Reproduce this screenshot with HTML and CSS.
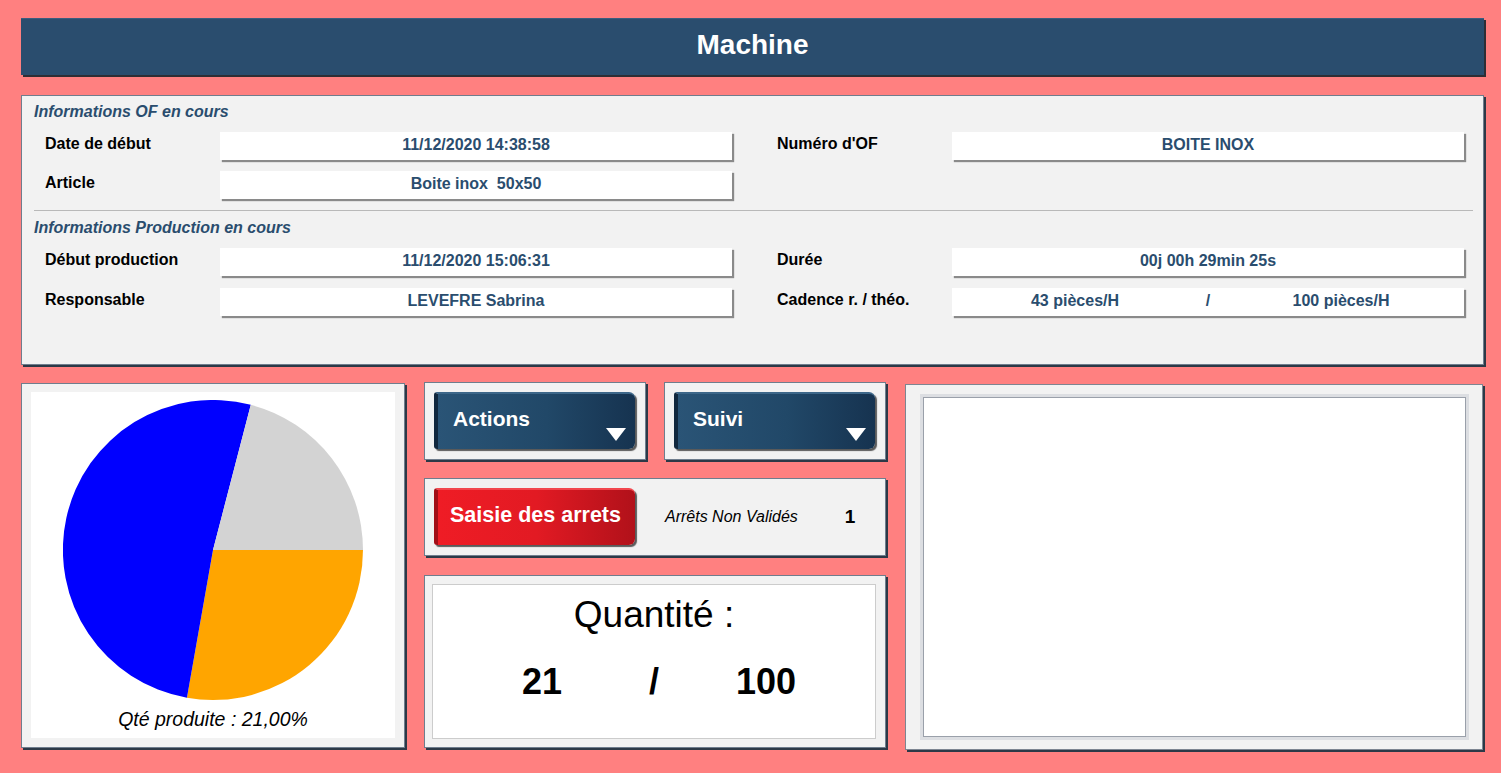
FILE: index.html
```html
<!DOCTYPE html>
<html lang="fr">
<head>
<meta charset="utf-8">
<title>Machine</title>
<link rel="stylesheet" href="styles.css">
</head>
<body>
<div class="page">
  <header class="header">Machine</header>

  <section class="info panel">
    <div class="sec-title">Informations OF en cours</div>
    <div class="row first">
      <div class="pair"><div class="label">Date de début</div><div class="field">11/12/2020 14:38:58</div></div>
      <div class="pair"><div class="label">Numéro d'OF</div><div class="field">BOITE INOX</div></div>
    </div>
    <div class="row">
      <div class="pair"><div class="label">Article</div><div class="field">Boite inox&nbsp; 50x50</div></div>
    </div>
    <div class="sep"></div>
    <div class="sec-title t2">Informations Production en cours</div>
    <div class="row first">
      <div class="pair"><div class="label">Début production</div><div class="field">11/12/2020 15:06:31</div></div>
      <div class="pair"><div class="label">Durée</div><div class="field">00j 00h 29min 25s</div></div>
    </div>
    <div class="row r2">
      <div class="pair"><div class="label">Responsable</div><div class="field">LEVEFRE Sabrina</div></div>
      <div class="pair"><div class="label">Cadence r. / théo.</div><div class="field split"><span>43 pièces/H</span><span>/</span><span>100 pièces/H</span></div></div>
    </div>
  </section>

  <div class="bottom">
    <section class="panel pie-panel">
      <div class="pie-inner">
        <svg class="pie" width="300" height="300" viewBox="0 0 300 300">
          <path d="M150 150 L300 150 A150 150 0 0 1 123.95 297.72 Z" fill="#FFA500"/>
          <path d="M150 150 L123.95 297.72 A150 150 0 1 1 187.8 4.85 Z" fill="#0000FF"/>
          <path d="M150 150 L187.8 4.85 A150 150 0 0 1 300 150 Z" fill="#D3D3D3"/>
        </svg>
        <div class="pie-caption">Qté produite : 21,00%</div>
      </div>
    </section>

    <div class="middle">
      <div class="menus">
        <div class="panel btn-panel">
          <div class="btn blue"><span>Actions</span><span class="tri"></span></div>
        </div>
        <div class="panel btn-panel">
          <div class="btn blue"><span>Suivi</span><span class="tri"></span></div>
        </div>
      </div>
      <div class="panel btn-panel arrets">
        <div class="btn red">Saisie des arrets</div>
        <span class="nv">Arrêts Non Validés</span>
        <span class="nv-count">1</span>
      </div>
      <div class="panel qty-panel">
        <div class="qty-inner">
          <div class="qty-title">Quantité :</div>
          <div class="qty-nums"><span>21</span><span>/</span><span>100</span></div>
        </div>
      </div>
    </div>

    <section class="panel right-panel">
      <div class="frame"><div class="canvas"></div></div>
    </section>
  </div>
</div>
</body>
</html>
```

FILE: styles.css
```css
* { box-sizing: border-box; }
html, body { margin: 0; padding: 0; }
body {
  background: #FF8080;
  font-family: "Liberation Sans", Arial, sans-serif;
  width: 1501px;
  height: 773px;
  overflow: hidden;
}
.page {
  padding: 18px 17px 0 21px;
}
.header {
  height: 57px;
  background: #2A4D6E;
  color: #fff;
  font-weight: bold;
  font-size: 28px;
  line-height: 52px;
  text-align: center;
  box-shadow: 2px 2px 0 #2e2e35;
  border-top: 1px solid #3a5d7e;
}
.panel {
  background: #F2F2F2;
  border: 1px solid #6f7d8d;
  box-shadow: 2px 2px 0 #2c3947;
}
.info {
  margin-top: 20px;
  height: 270px;
  padding: 6px 10px 0 12px;
}
.sec-title {
  color: #2A4D6E;
  font-style: italic;
  font-weight: bold;
  font-size: 16px;
  line-height: 20px;
  height: 20px;
}
.row {
  display: flex;
  gap: 45px;
  padding-left: 11px;
  margin-top: 11px;
}
.row.first { margin-top: 10px; }
.row.r2 { margin-top: 12px; }
.pair {
  display: flex;
}
.label {
  width: 175px;
  font-weight: bold;
  font-size: 16px;
  line-height: 23px;
  color: #000;
}
.field {
  width: 512px;
  height: 28px;
  background: #fff;
  box-shadow: 2px 2px 1px #8a8a8a;
  color: #2A4D6E;
  font-weight: bold;
  font-size: 16px;
  line-height: 25px;
  text-align: center;
}
.field.split {
  display: grid;
  grid-template-columns: 133px 133px 133px;
  justify-content: center;
}
.sep {
  height: 1px;
  background: #b9b9b9;
  margin: 11px 0 0 0;
}
.sec-title.t2 { margin-top: 7px; }

.bottom {
  display: flex;
  margin-top: 18px;
  height: 365px;
  gap: 19px;
}
.pie-panel {
  width: 384px;
  padding: 8px 9px 9px 9px;
}
.pie-inner {
  background: #fff;
  height: 100%;
  display: flex;
  flex-direction: column;
  align-items: center;
  padding-top: 8px;
}
.pie { display: block; }
.pie-caption {
  margin-top: 8px;
  font-style: italic;
  font-size: 19.5px;
  line-height: 22px;
  color: #000;
}
.middle {
  width: 462px;
  display: flex;
  flex-direction: column;
  gap: 18px;
  margin-top: -1px;
}
.menus {
  display: flex;
  gap: 18px;
}
.btn-panel {
  height: 78px;
  width: 222px;
  padding: 9px 10px 0 9px;
}
.btn {
  height: 57px;
  width: 201px;
  color: #fff;
  font-weight: bold;
  font-size: 21px;
  line-height: 24px;
  border-radius: 3px 6px 6px 3px;
  box-shadow: 2px 2px 1px #5a5a5a;
}
.btn.blue {
  display: flex;
  justify-content: space-between;
  padding: 13px 9px 8px 15px;
  border-left: 4px solid #11283e;
  border-top: 2px solid #3d6789;
  background: linear-gradient(90deg, #2a5476 0%, #214868 55%, #163350 100%);
}
.tri {
  align-self: flex-end;
  width: 0;
  height: 0;
  border-left: 10px solid transparent;
  border-right: 10px solid transparent;
  border-top: 13px solid #fff;
}
.arrets {
  width: 462px;
  display: flex;
  align-items: center;
  padding-bottom: 10px;
}
.btn.red {
  flex: none;
  display: flex;
  align-items: center;
  justify-content: center;
  border-left: 4px solid #a20f17;
  border-top: 2px solid #f2474e;
  background: linear-gradient(90deg, #ef1c25 0%, #e21a23 50%, #b1111a 100%);
  font-size: 21.5px;
  padding-bottom: 6px;
  padding-right: 2px;
}
.nv {
  margin-left: 30px;
  font-style: italic;
  font-size: 16px;
  color: #000;
}
.nv-count {
  margin-left: 47px;
  font-weight: bold;
  font-size: 19px;
  color: #000;
}
.qty-panel {
  flex: 1;
  margin-top: 1px;
  padding: 8px 9px 8px 7px;
}
.qty-inner {
  background: #fff;
  border: 1px solid #cccccc;
  height: 100%;
  text-align: center;
  color: #000;
}
.qty-title {
  font-size: 37px;
  line-height: 40px;
  margin-top: 10px;
}
.qty-nums {
  display: grid;
  grid-template-columns: 112px 112px 112px;
  justify-content: center;
  font-weight: bold;
  font-size: 36px;
  line-height: 40px;
  margin-top: 27px;
}
.right-panel {
  width: 578px;
  margin-top: 1px;
  height: 366px;
  padding: 9px 13px 9px 14px;
  border-color: #7d8591;
}
.frame {
  background: #dcdee2;
  height: 100%;
  padding: 3px;
}
.canvas {
  background: #fff;
  border: 1px solid #9aa0aa;
  height: 100%;
}
```
